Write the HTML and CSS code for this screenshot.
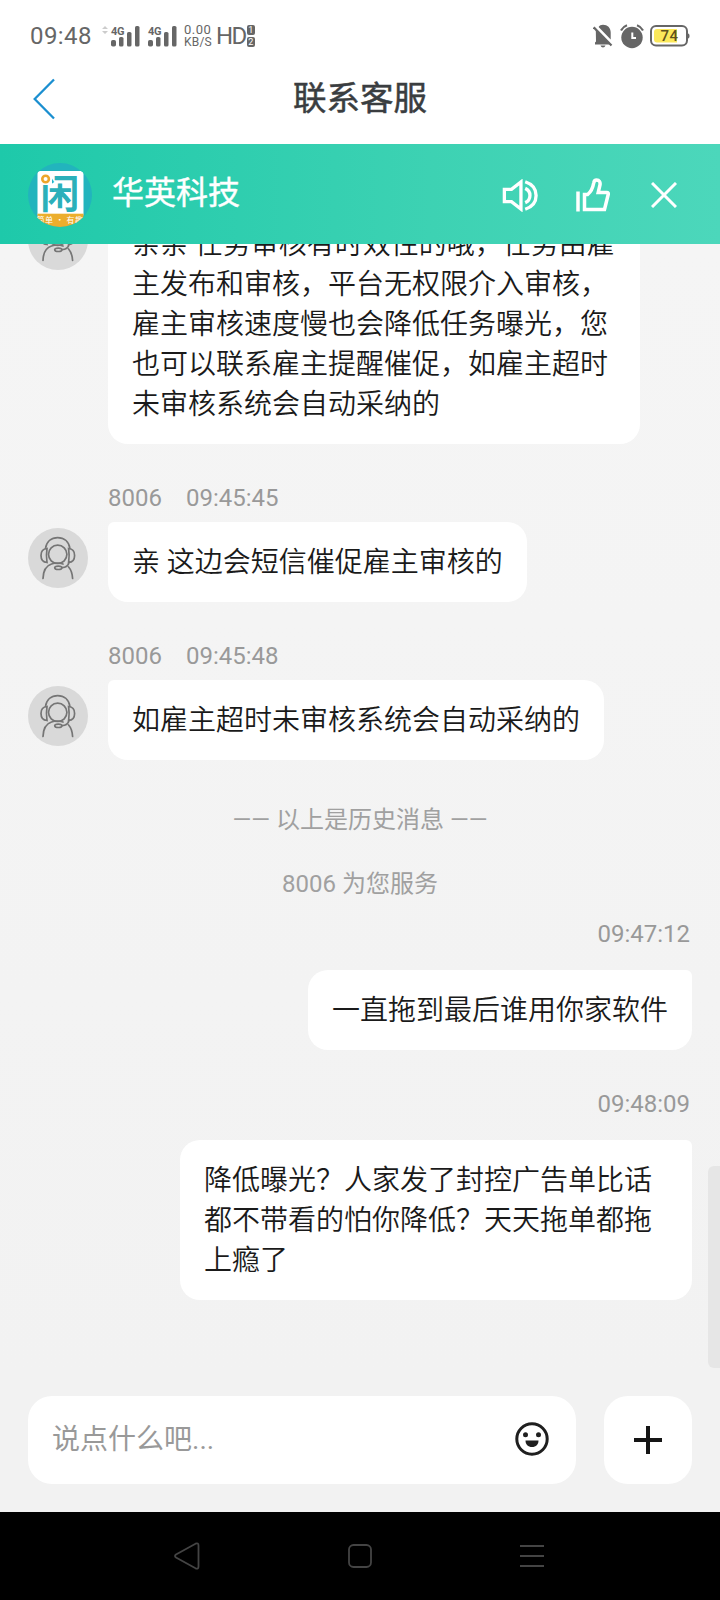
FILE: index.html
```html
<!DOCTYPE html>
<html lang="zh-CN">
<head>
<meta charset="utf-8">
<title>联系客服</title>
<link rel="stylesheet" href="styles.css">
</head>
<body>
<svg class="defs" width="0" height="0" aria-hidden="true">
  <symbol id="agent" viewBox="0 0 60 60">
    <g fill="none" stroke="#757575" stroke-width="1.700" stroke-linecap="round">
      <circle cx="29.700" cy="26.300" r="9.200"/>
      <path d="M17.500 20.500C18.500 13.500 23.500 9.700 29.700 9.700s11.200 3.800 12.200 10.800"/>
      <path d="M19 20.500c-4 .3-6 3.300-6 7s2 6.700 6 7c-.7-4.600-.7-9.400 0-14zM40.600 20.500c4 .3 6 3.300 6 7s-2 6.700-6 7c.7-4.600.7-9.400 0-14z"/>
      <path d="M15 50.500c.2-7.500 3-12.700 8.500-14.500 4-1.300 8-1.300 11.500 0M44.600 50.500c-.3-5-1.500-8.700-4-11.500M41 34.500c-.8 3.300-3 5-7 5.200"/>
      <ellipse cx="30.300" cy="39.800" rx="3.600" ry="1.700"/>
    </g>
  </symbol>
</svg>
<div class="phone">
  <header class="status">
    <span class="clock">09:48</span>
    <svg class="updown" width="6" height="8" viewBox="0 0 6 8"><path d="M0 3L3 0l3 3zM0 5l3 3 3-3z" fill="#ccc"/></svg>
    <svg class="bars" width="29" height="21" viewBox="0 0 29 21">
      <text x="0" y="8.500" class="signal-label">4G</text>
      <g fill="#666"><rect x="0" y="14" width="5" height="6.500" rx="1.800"/><rect x="8" y="11" width="4.500" height="9.500" rx="1.600"/><rect x="16" y="6" width="4.500" height="14.500" rx="1.600"/><rect x="24" y="0" width="4.500" height="20.500" rx="1.600"/></g>
    </svg>
    <svg class="bars" width="29" height="21" viewBox="0 0 29 21">
      <text x="0" y="8.500" class="signal-label">4G</text>
      <g fill="#666"><rect x="0" y="14" width="5" height="6.500" rx="1.800"/><rect x="8" y="11" width="4.500" height="9.500" rx="1.600"/><rect x="16" y="6" width="4.500" height="14.500" rx="1.600"/><rect x="24" y="0" width="4.500" height="20.500" rx="1.600"/></g>
    </svg>
    <span class="speed"><span>0.00</span><span class="unit">KB/S</span></span>
    <span class="hd">HD</span>
    <span class="sims"><span>1</span><span>2</span></span>
    <span class="status-right">
      <svg width="20" height="24" viewBox="0 0 20 24"><path d="M10 .8c4.500 0 7.700 3 7.700 7.500v7.200L5.600 3C6.500 1.700 8 .8 10 .8zM2.800 5.800L17.200 20.500H2v-2l1-1zM7.500 21.500h5c-.5 1.300-1.300 2-2.500 2s-2-.7-2.500-2z" fill="#666"/><path d="M.7 3.300l17.800 18.200" stroke="#666" stroke-width="2.200"/></svg>
      <svg width="24" height="25" viewBox="0 0 24 25"><circle cx="12" cy="13.500" r="10.700" fill="#666"/><path d="M1 6.500Q3 2.700 7 1.300M23 6.500Q21 2.700 17 1.300" fill="none" stroke="#666" stroke-width="2.200"/><path d="M12.300 8.500v5.500H16" fill="none" stroke="#fff" stroke-width="2"/></svg>
      <svg width="40" height="22" viewBox="0 0 40 22"><rect x="1" y="1" width="36" height="19.500" rx="5" fill="#fff" stroke="#666" stroke-width="2"/><path d="M38 8.500c2 0 2 5 0 5z" fill="#666"/><path d="M7 4h20v13.500H7a3 3 0 0 1-3-3V7a3 3 0 0 1 3-3z" fill="#fbe85a"/><text x="10.500" y="16" class="battery-label">74</text></svg>
    </span>
  </header>

  <nav class="titlebar">
    <svg class="back" width="22" height="42" viewBox="0 0 22 42"><path d="M21 1.500L1.700 21 21 40.500" fill="none" stroke="#1b8fd0" stroke-width="2.300"/></svg>
    <h1 class="title">联系客服</h1>
  </nav>

  <section class="company">
    <svg class="logo" width="64" height="64" viewBox="0 0 64 64">
      <clipPath id="disc"><circle cx="32" cy="32" r="32"/></clipPath>
      <g clip-path="url(#disc)">
        <rect width="64" height="64" fill="#22b4bd"/>
        <rect x="9.500" y="8" width="46" height="46" rx="3" fill="#fff"/>
        <text x="12.500" y="44.500" class="logo-mark">闲</text>
        <rect x="11" y="9" width="13" height="13" fill="#fff"/>
        <circle cx="17.600" cy="16" r="3.300" fill="#fff" stroke="#eda62b" stroke-width="2.600"/>
        <rect x="9.500" y="50.700" width="46" height="14" fill="#ecae2d"/>
        <text x="32" y="59.500" class="logo-caption">简单 · 有趣</text>
      </g>
    </svg>
    <span class="company-name">华英科技</span>
    <span class="actions">
      <svg width="36" height="33" viewBox="0 0 38 34"><g fill="none" stroke="#fff" stroke-width="3.500"><path d="M2.500 10.500h7.500l10-7.800v28.600l-10-7.800H2.500z"/><path d="M24.500 2.500C32 5 36 10 36 17s-4 12-11.500 14.500M24.500 9.500c3.500 1.500 5 4 5 7.500s-1.500 6-5 7.500"/></g></svg>
      <svg class="like" width="34" height="34" viewBox="0 0 34 34"><g fill="none" stroke="#fff" stroke-width="3.500"><path d="M2 13.500v20"/><path d="M8.500 31.500V16.500h3.200c3-2.500 5-5.800 6-11.500.3-2 1.500-3 3-3 2.500 0 3.800 2 3.300 5l-1.800 7.500h8.600c1.300 0 1.700.7 1.400 2L28.500 31.500z"/></g></svg>
      <svg width="26" height="26" viewBox="0 0 26 26"><path d="M1 1l24 24M25 1L1 25" stroke="#fff" stroke-width="3"/></svg>
    </span>
  </section>

  <main class="chat">
    <div class="history">
      <div class="row first">
        <svg class="avatar"><use href="#agent"/></svg>
        <div class="bubble in">亲亲 任务审核有时效性的哦，任务由雇主发布和审核，平台无权限介入审核，雇主审核速度慢也会降低任务曝光，您也可以联系雇主提醒催促，如雇主超时未审核系统会自动采纳的</div>
      </div>
      <div class="meta"><span>8006</span><span>09:45:45</span></div>
      <div class="row">
        <svg class="avatar"><use href="#agent"/></svg>
        <div class="bubble in">亲 这边会短信催促雇主审核的</div>
      </div>
      <div class="meta"><span>8006</span><span>09:45:48</span></div>
      <div class="row">
        <svg class="avatar"><use href="#agent"/></svg>
        <div class="bubble in">如雇主超时未审核系统会自动采纳的</div>
      </div>
      <p class="notice">—— 以上是历史消息 ——</p>
      <p class="notice service">8006 为您服务</p>
      <div class="sent"><time>09:47:12</time><div class="bubble out">一直拖到最后谁用你家软件</div></div>
      <div class="sent"><time>09:48:09</time><div class="bubble out">降低曝光？人家发了封控广告单比话都不带看的怕你降低？天天拖单都拖上瘾了</div></div>
    </div>
    <div class="scrollbar"></div>
  </main>

  <footer class="composer">
    <div class="field">
      <span class="placeholder">说点什么吧...</span>
      <svg width="34" height="34" viewBox="0 0 34 34"><circle cx="17" cy="17" r="15.200" fill="none" stroke="#1f1f1f" stroke-width="3"/><circle cx="10.500" cy="12.800" r="2.500" fill="#1f1f1f"/><circle cx="23.500" cy="12.800" r="2.500" fill="#1f1f1f"/><path d="M10.500 18.500h13c0 4-2.500 6.500-6.500 6.500s-6.500-2.500-6.500-6.500z" fill="#1f1f1f"/></svg>
    </div>
    <div class="plus"><svg width="28" height="28" viewBox="0 0 28 28"><path d="M14 0v28M0 14h28" stroke="#151515" stroke-width="4"/></svg></div>
  </footer>

  <div class="navkeys">
    <svg width="26" height="28" viewBox="0 0 26 28"><path d="M2 12.500L21.500 1.700q3-1.200 3 1.800v21q0 3-3 1.800L2 15.500q-2-1.500 0-3z" fill="none" stroke="#444" stroke-width="1.800"/></svg>
    <svg width="24" height="24" viewBox="0 0 24 24"><rect x="1" y="1" width="22" height="22" rx="4.500" fill="none" stroke="#444" stroke-width="1.800"/></svg>
    <svg width="24" height="24" viewBox="0 0 24 24"><path d="M0 2h24M0 12h24M0 22h24" stroke="#444" stroke-width="2"/></svg>
  </div>
</div>
</body>
</html>
```
FILE: styles.css
```css
* { box-sizing: border-box; }
body { margin: 0; font-family: Roboto, "Noto Sans CJK SC", sans-serif; }
svg { display: block; flex: none; }
.defs { position: absolute; }
.phone { width: 720px; height: 1600px; display: flex; flex-direction: column; overflow: hidden; background: #fff; }

.status { height: 72px; flex: none; display: flex; align-items: center; padding: 0 30px; color: #666; }
.clock { font-size: 24px; letter-spacing: 0.4px; width: 72px; line-height: 72px; }
.updown { margin-bottom: 12px; }
.bars { margin-left: 3px; overflow: visible; }
.bars + .bars { margin-left: 8px; }
.signal-label { font: bold 11px Roboto, sans-serif; letter-spacing: -0.4px; fill: #666; }
.speed { display: flex; flex-direction: column; width: 28px; margin-left: 7px; font-size: 13px; line-height: 12px; letter-spacing: 0.5px; }
.unit { font-size: 12px; letter-spacing: 0.2px; }
.hd { font-size: 24px; margin-left: 4px; letter-spacing: -1.5px; line-height: 72px; }
.sims { display: flex; flex-direction: column; gap: 2px; margin-left: 1px; }
.sims span { width: 8px; height: 10px; background: #666; color: #fff; border-radius: 2px; font-size: 9px; line-height: 10px; text-align: center; }
.status-right { display: flex; align-items: center; gap: 7px; margin-left: auto; }
.status-right svg:last-child { margin-left: -1px; }
.battery-label { font: 500 15px Roboto, sans-serif; letter-spacing: 0.4px; fill: #5f521c; }

.titlebar { height: 72px; flex: none; display: grid; grid-template-columns: 1fr auto 1fr; align-items: center; padding: 0 33px 18px; }
.titlebar::after { content: ""; }
.title { margin: 0; font-size: 33.5px; line-height: 50px; font-weight: 400; -webkit-text-stroke: 0.5px #3a3d40; color: #3a3d40; }

.company { height: 100px; flex: none; display: flex; align-items: center; padding: 0 43px 0 28px; color: #fff; background: linear-gradient(90deg, #1ec9aa, #3dd2b3 60%, #4cd7bb); }
.logo { margin-top: 1px; }
.logo-mark { font: bold 39px "Noto Sans CJK SC", sans-serif; fill: #2bb0ba; }
.logo-caption { font: 8px "Noto Sans CJK SC", sans-serif; letter-spacing: 0.5px; fill: #fff; text-anchor: middle; }
.company-name { margin: 0 0 2px 20px; font-size: 32px; line-height: 46px; font-weight: 400; -webkit-text-stroke: 0.4px #fff; }
.actions { display: flex; align-items: center; margin: 2px 0 0 auto; }
.like { margin: 0 41px 0 38px; }

.chat { height: 1128px; flex: none; display: flex; overflow: hidden; background: linear-gradient(#f5f5f5, #f2f2f2); }
.history { width: 692px; margin-top: -40px; padding-left: 28px; display: flex; flex-direction: column; }
.row { display: flex; align-items: flex-start; gap: 20px; }
.avatar { width: 60px; height: 60px; margin-top: 6px; border-radius: 50%; background: #d9d9d9; }
.bubble { padding: 21px 24px 19px; background: #fff; color: #1a1a1a; font-size: 28px; line-height: 40px; font-weight: 350; word-break: break-all; }
.in { max-width: 532px; border-radius: 6px 20px 20px 20px; }
.out { max-width: 512px; border-radius: 20px 6px 20px 20px; }
.meta { height: 78px; padding: 38px 0 0 80px; display: flex; gap: 24px; color: #999; font-size: 24px; line-height: 32px; }
.notice { margin: 42px 0 0; width: 664px; height: 36px; line-height: 36px; font-size: 24px; text-align: center; color: #a0a0a0; }
.service { margin-top: 28px; }
.sent { display: flex; flex-direction: column; align-items: flex-end; }
.sent time { height: 52px; margin-top: 38px; padding-right: 2px; line-height: 32px; font-size: 24px; color: #999; }
.service + .sent time { margin-top: 16px; }
.scrollbar { width: 12px; height: 202px; margin: 922px 0 0 auto; border-radius: 6px 0 0 6px; background: #e6e6e6; }

.composer { height: 140px; flex: none; padding: 24px 28px 28px; display: flex; gap: 28px; background: #f2f2f2; }
.field, .plus { height: 88px; border-radius: 24px; background: #fff; display: flex; align-items: center; }
.field { width: 548px; justify-content: space-between; padding: 0 27px 2px 24px; color: #999; font-size: 28px; }
.placeholder { padding-bottom: 4px; }
.plus { width: 88px; justify-content: center; }

.navkeys { height: 88px; flex: none; display: flex; align-items: center; justify-content: space-between; padding: 0 176px 0 174px; background: #000; }
```
